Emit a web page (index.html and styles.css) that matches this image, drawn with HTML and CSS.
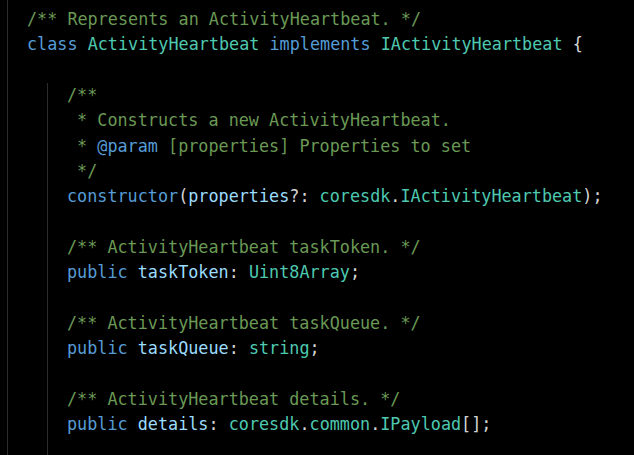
FILE: index.html
```html
<!DOCTYPE html>
<html>
<head>
<meta charset="utf-8">
<link rel="stylesheet" href="styles.css">
</head>
<body>
<div class="editor">
  <div class="guide outer">
    <div class="line"><span class="c">/** Represents an ActivityHeartbeat. */</span></div>
    <div class="line"><span class="k">class</span> <span class="t">ActivityHeartbeat</span> <span class="k">implements</span> <span class="t">IActivityHeartbeat</span> <span class="p">{</span></div>
    <div class="line"></div>
    <div class="guide inner">
      <div class="line"><span class="c">/**</span></div>
      <div class="line"><span class="c"> * Constructs a new ActivityHeartbeat.</span></div>
      <div class="line"><span class="c"> * </span><span class="k">@param</span><span class="c"> [properties] Properties to set</span></div>
      <div class="line"><span class="c"> */</span></div>
      <div class="line"><span class="k">constructor</span><span class="p">(</span><span class="v">properties</span><span class="p">?: </span><span class="t">coresdk</span><span class="p">.</span><span class="t">IActivityHeartbeat</span><span class="p">);</span></div>
      <div class="line"></div>
      <div class="line"><span class="c">/** ActivityHeartbeat taskToken. */</span></div>
      <div class="line"><span class="k">public</span> <span class="v">taskToken</span><span class="p">: </span><span class="t">Uint8Array</span><span class="p">;</span></div>
      <div class="line"></div>
      <div class="line"><span class="c">/** ActivityHeartbeat taskQueue. */</span></div>
      <div class="line"><span class="k">public</span> <span class="v">taskQueue</span><span class="p">: </span><span class="t">string</span><span class="p">;</span></div>
      <div class="line"></div>
      <div class="line"><span class="c">/** ActivityHeartbeat details. */</span></div>
      <div class="line"><span class="k">public</span> <span class="v">details</span><span class="p">: </span><span class="t">coresdk</span><span class="p">.</span><span class="t">common</span><span class="p">.</span><span class="t">IPayload</span><span class="p">[];</span></div>
    </div>
  </div>
</div>
</body>
</html>
```
FILE: styles.css
```css
html, body {
  margin: 0;
  padding: 0;
  background: #000;
  overflow: hidden;
  height: 100%;
}
.editor {
  padding-left: 7px;
  height: 100%;
  font-family: "DejaVu Sans Mono", monospace;
  font-size: 16.8px;
  line-height: 25.33px;
  color: #d4d4d4;
}
.guide {
  border-left: 1px solid #2c2c2c;
  padding-left: 19px;
}
.outer {
  padding-top: 7px;
  height: 100%;
  box-sizing: border-box;
  display: flex;
  flex-direction: column;
}
.inner {
  margin-left: 20px;
  flex: 1;
}
.line {
  height: 25.33px;
  white-space: pre;
}
.c { color: #6a9955; }
.k { color: #569cd6; }
.t { color: #4ec9b0; }
.v { color: #9cdcfe; }
.p { color: #d4d4d4; }
```
